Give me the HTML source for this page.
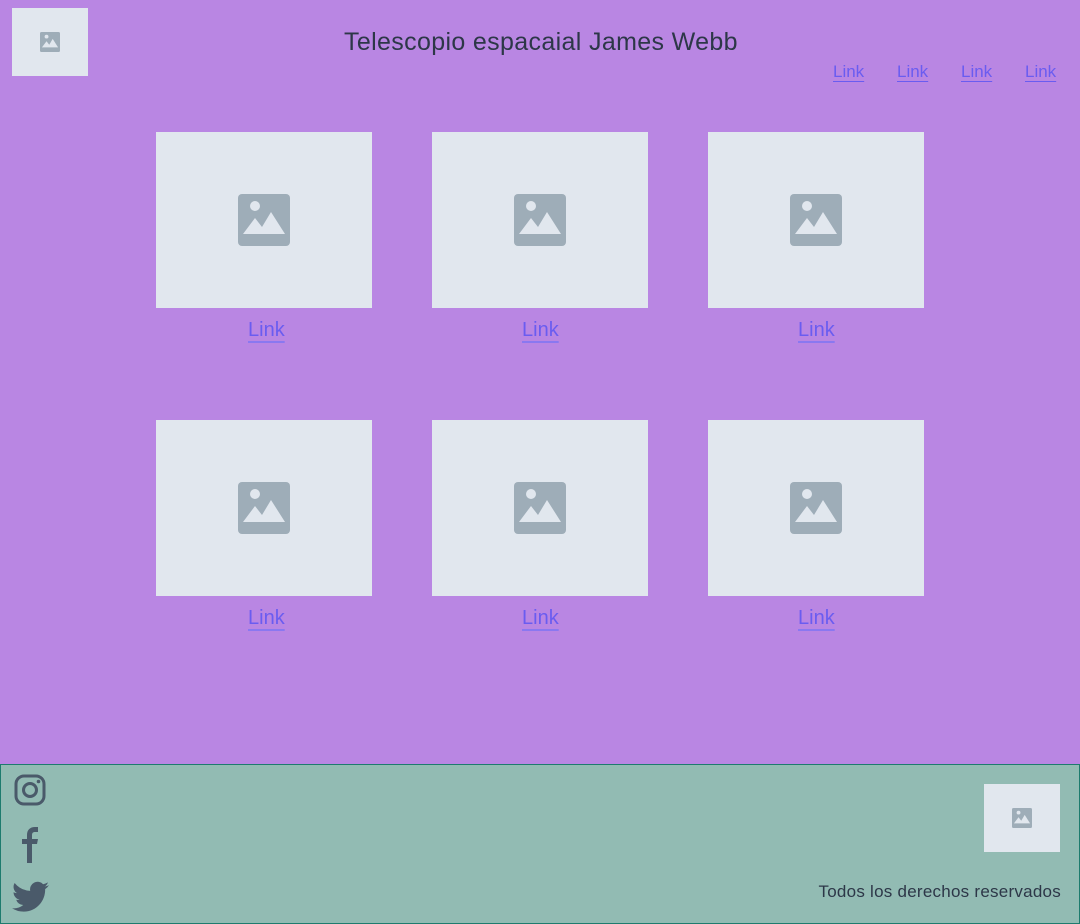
<html><head><style>
body{margin:0;width:1080px;height:924px;background:#b986e3;font-family:"Liberation Sans",sans-serif;position:relative;overflow:hidden}
.a{position:absolute}
.card{position:absolute;width:216px;height:176px;background:#e1e7ee}
.card svg{position:absolute;left:82px;top:62px}
.lk{position:absolute;color:#6a5cf0;font-size:20px;text-decoration:underline;text-decoration-color:#8a78f0;text-underline-offset:5px}
.nl{position:absolute;top:62px;color:#6a5cf0;font-size:17px;text-decoration:underline;text-underline-offset:4px}
footer{position:absolute;left:0;top:764px;width:1078px;height:158px;background:#92bbb3;border:1px solid #1e7b6e}
</style></head><body>
<svg width="0" height="0" style="position:absolute"><defs><symbol id="im" viewBox="0 0 52 52"><rect x="0" y="0" width="52" height="52" rx="4" fill="#9eadb8"/><circle cx="17" cy="12" r="5" fill="#e1e7ee"/><path d="M5 40 L17 24 L24 33 L33 18 L47 40 Z" fill="#e1e7ee"/></symbol></defs></svg>
<div class="a" style="left:12px;top:8px;width:76px;height:68px;background:#e1e7ee"><svg class="a" style="left:28px;top:24px" width="20" height="20"><use href="#im"/></svg></div>
<div class="a" style="left:344px;top:28px;font-size:25px;color:#2d3748;letter-spacing:0.35px">Telescopio espacaial James Webb</div>
<span class="nl" style="left:833px">Link</span><span class="nl" style="left:897px">Link</span><span class="nl" style="left:961px">Link</span><span class="nl" style="left:1025px">Link</span>
<div class="card" style="left:156px;top:132px"><svg width="52" height="52"><use href="#im"/></svg></div>
<div class="card" style="left:432px;top:132px"><svg width="52" height="52"><use href="#im"/></svg></div>
<div class="card" style="left:708px;top:132px"><svg width="52" height="52"><use href="#im"/></svg></div>
<div class="card" style="left:156px;top:420px"><svg width="52" height="52"><use href="#im"/></svg></div>
<div class="card" style="left:432px;top:420px"><svg width="52" height="52"><use href="#im"/></svg></div>
<div class="card" style="left:708px;top:420px"><svg width="52" height="52"><use href="#im"/></svg></div>
<span class="lk" style="left:248px;top:319px">Link</span><span class="lk" style="left:522px;top:319px">Link</span><span class="lk" style="left:798px;top:319px">Link</span>
<span class="lk" style="left:248px;top:607px">Link</span><span class="lk" style="left:522px;top:607px">Link</span><span class="lk" style="left:798px;top:607px">Link</span>
<footer>
<svg class="a" style="left:13px;top:9px" width="32" height="32" viewBox="0 0 32 32"><rect x="2" y="2" width="28" height="28" rx="8" fill="none" stroke="#4a5a6a" stroke-width="3"/><circle cx="16" cy="16" r="6.5" fill="none" stroke="#4a5a6a" stroke-width="3"/><circle cx="24.5" cy="7.5" r="1.8" fill="#4a5a6a"/></svg>
<svg class="a" style="left:18px;top:62px" width="22" height="36" viewBox="0 0 22 36"><path d="M8 36V17H3v-5h5V8c0-5 3-8 8-8h3v5h-3c-2 0-3 1-3 3v4h6l-1 5h-5v19z" fill="#4a5a6a"/></svg>
<svg class="a" style="left:11px;top:116px" width="37" height="32" viewBox="0 0 24 20"><path d="M24 2.4a10 10 0 0 1-2.8.8A4.9 4.9 0 0 0 23.3.5a9.8 9.8 0 0 1-3.1 1.2A4.9 4.9 0 0 0 11.8 6 14 14 0 0 1 1.7.9a4.9 4.9 0 0 0 1.5 6.6A4.9 4.9 0 0 1 1 6.9a4.9 4.9 0 0 0 3.9 4.8 4.9 4.9 0 0 1-2.2.1 4.9 4.9 0 0 0 4.6 3.4A9.9 9.9 0 0 1 0 17.3 14 14 0 0 0 7.5 19.5c9 0 14-7.5 14-14v-.6A10 10 0 0 0 24 2.4z" fill="#4a5a6a"/></svg>
<div class="a" style="left:983px;top:19px;width:76px;height:68px;background:#e1e7ee"><svg class="a" style="left:28px;top:24px" width="20" height="20"><use href="#im"/></svg></div>
<div class="a" style="right:18px;top:117px;font-size:17px;color:#2d3748;letter-spacing:0.25px">Todos los derechos reservados</div>
</footer>
</body></html>
